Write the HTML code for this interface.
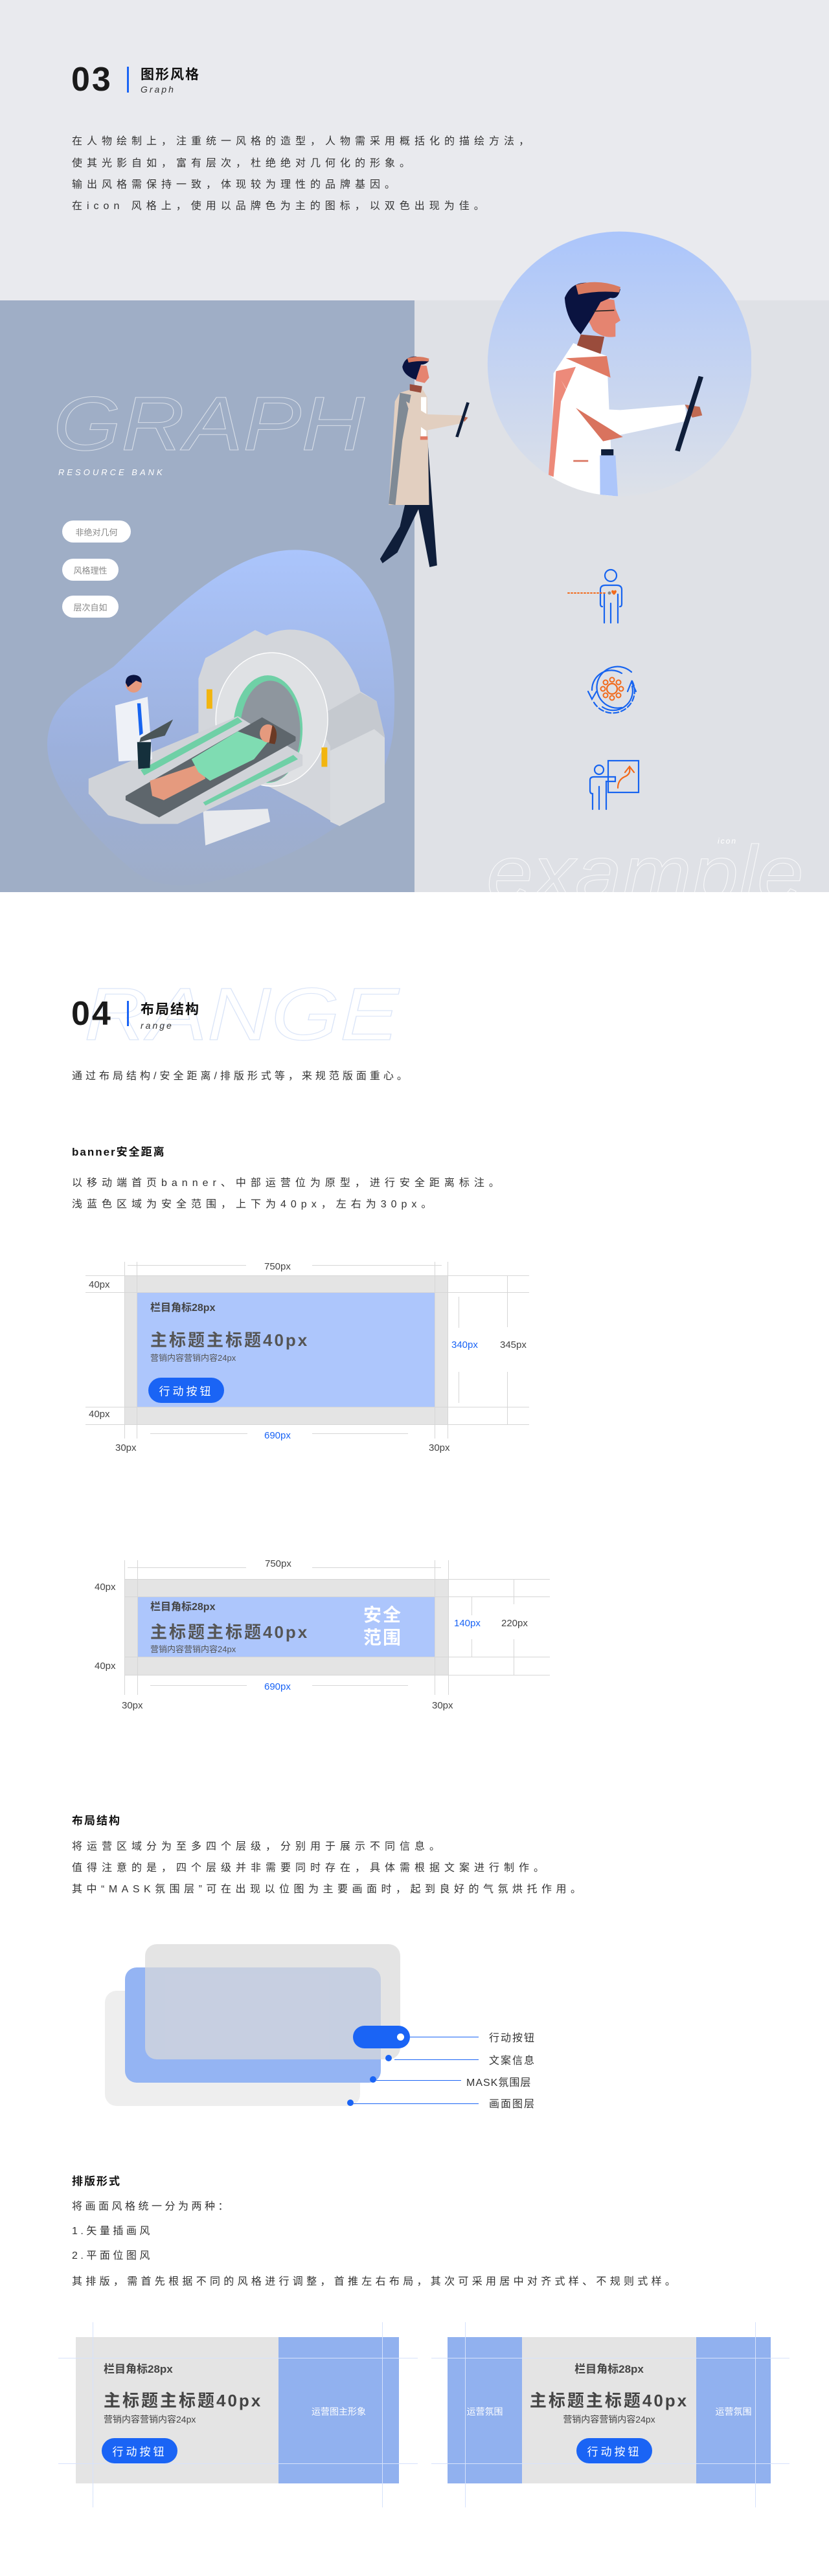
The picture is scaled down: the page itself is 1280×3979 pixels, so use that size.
<!DOCTYPE html>
<html><head><meta charset="utf-8">
<style>
*{margin:0;padding:0;box-sizing:border-box}
body{width:1280px;height:3979px;background:#fff;font-family:"Liberation Sans","Noto Sans CJK SC",sans-serif;overflow:hidden}
#r{position:relative;width:1280px;height:3979px;overflow:hidden}
.a{position:absolute}
.t{position:absolute;white-space:nowrap;line-height:1}
.b{font-weight:bold}
.body{font-size:16px;color:#333;letter-spacing:7px}
.gl{position:absolute;background:#d6d6d6}
.bl{position:absolute;background:#d6e2fb}
.btn{position:absolute;background:#1a64f5;border-radius:20px;color:#fff;font-size:17px;letter-spacing:4px;display:flex;align-items:center;justify-content:center}
.pill{position:absolute;background:#fff;border-radius:17px;font-size:13px;color:#888;display:flex;align-items:center;justify-content:center}
</style></head><body><div id="r">

<!-- SECTION 1 -->
<div class="a" style="left:0;top:0;width:1280px;height:464px;background:#e9eaee"></div>
<div class="a" style="left:0;top:464px;width:640px;height:914px;background:#9faec6"></div>
<div class="a" style="left:640px;top:464px;width:640px;height:914px;background:#dfe1e6"></div>

<div class="t b" style="left:110px;top:97px;font-size:52px;color:#1a1a1a;letter-spacing:3px">03</div>
<div class="a" style="left:196px;top:103px;width:3px;height:40px;background:#1a64f5"></div>
<div class="t b" style="left:217px;top:105px;font-size:21px;color:#111;letter-spacing:2px">图形风格</div>
<div class="t" style="left:217px;top:131px;font-size:14px;font-style:italic;color:#333;letter-spacing:3px">Graph</div>

<div class="t body" style="left:111px;top:211px">在人物绘制上，注重统一风格的造型，人物需采用概括化的描绘方法，</div>
<div class="t body" style="left:111px;top:245px">使其光影自如，富有层次，杜绝绝对几何化的形象。</div>
<div class="t body" style="left:111px;top:278px">输出风格需保持一致，体现较为理性的品牌基因。</div>
<div class="t body" style="left:111px;top:311px">在icon 风格上，使用以品牌色为主的图标，以双色出现为佳。</div>

<svg class="a" style="left:0;top:0" width="1280" height="1400">
<defs>
<linearGradient id="cg" x1="0" y1="0" x2="0" y2="1"><stop offset="0" stop-color="#abc5fb"/><stop offset="1" stop-color="#dde1e8"/></linearGradient>
<linearGradient id="bg" x1="0" y1="0" x2="0" y2="1"><stop offset="0" stop-color="#abc5fc"/><stop offset="0.6" stop-color="#9cb0dc"/><stop offset="1" stop-color="#9eadc8"/></linearGradient>
</defs>
<path d="M175,1030 C260,950 360,840 470,850 C590,860 615,1000 608,1120 C600,1230 520,1290 420,1330 C330,1370 250,1385 200,1340 C130,1280 60,1200 75,1130 C85,1080 130,1060 175,1030 Z" fill="url(#bg)"/>
<text x="82" y="695" font-family="Liberation Sans" font-style="italic" font-size="118" fill="none" stroke="#fff" stroke-opacity="0.6" stroke-width="1" textLength="481" lengthAdjust="spacingAndGlyphs">GRAPH</text>
<text x="751" y="1390" font-family="Liberation Sans" font-style="italic" font-size="120" fill="none" stroke="#fff" stroke-opacity="0.8" stroke-width="1" textLength="490" lengthAdjust="spacingAndGlyphs">example</text>
<text x="1108" y="1303" font-family="Liberation Sans" font-style="italic" font-size="12" fill="#fff" letter-spacing="2">icon</text>
<!-- icons -->
<g fill="none" stroke="#1764f0" stroke-width="2.2" stroke-linecap="round">
<circle cx="943" cy="889" r="9"/>
<path d="M930,937 Q927,937 927,933 V911 Q927,904 935,904 H952 Q960,904 960,911 V933 Q960,937 957,937"/>
<path d="M933,918 V962 M954,918 V962 M943,932 V962"/>
<path d="M975,1038 A32,32 0 1,0 960,1093"/>
<path d="M917,1085 A32,32 0 0,0 975,1050" stroke-dasharray="8 4"/>
<path d="M914,1066 A30,30 0 0,1 960,1040 M976,1060 A30,30 0 0,1 930,1092"/>
<path d="M908,1068 L914,1080 L921,1068 M969,1068 L975,1053 L982,1068"/>
<rect x="939" y="1175" width="47" height="49"/>
<circle cx="925" cy="1189" r="7"/>
<path d="M915,1250 V1226 Q911,1226 911,1221 V1205 Q911,1200 917,1200 H950 V1207 H936 V1250 M925,1215 V1250"/>
</g>
<g fill="none" stroke="#f26a1b" stroke-width="2.2" stroke-linecap="round">
<path d="M954,1217 Q954,1205 964,1200 Q974,1196 972,1187 M965,1193 L972,1184 L979,1193"/>
<circle cx="945" cy="1064" r="8"/>
<g stroke-width="2">
<circle cx="945" cy="1050" r="3.5"/><circle cx="955" cy="1054" r="3.5"/><circle cx="959" cy="1064" r="3.5"/><circle cx="955" cy="1074" r="3.5"/><circle cx="945" cy="1078" r="3.5"/><circle cx="935" cy="1074" r="3.5"/><circle cx="931" cy="1064" r="3.5"/><circle cx="935" cy="1054" r="3.5"/>
</g>
<path d="M877,916 H936" stroke-dasharray="2 3" stroke-width="2"/>
</g>
<circle cx="941" cy="916" r="2.5" fill="#888"/>
<path d="M944,913 Q946,910 948,913 Q950,910 952,913 Q952,916 948,919 Q944,916 944,913Z" fill="#f26a1b"/>
</svg>

<div class="t" style="left:90px;top:723px;font-size:13px;color:#fff;letter-spacing:4px;font-style:italic">RESOURCE BANK</div>
<div class="pill" style="left:96px;top:804px;width:106px;height:34px">非绝对几何</div>
<div class="pill" style="left:96px;top:863px;width:87px;height:34px">风格理性</div>
<div class="pill" style="left:96px;top:920px;width:87px;height:34px">层次自如</div>

<!-- circle + doctors -->
<svg class="a" style="left:560px;top:320px" width="600" height="580" viewBox="0 0 1568 1740" preserveAspectRatio="none">
<defs><clipPath id="cc"><ellipse cx="1037" cy="726" rx="533" ry="613"/></clipPath></defs>
<ellipse cx="1037" cy="726" rx="533" ry="613" fill="url(#cg)"/>
<g clip-path="url(#cc)">
<path d="M850,630 L985,690 L1010,1340 L760,1300 L770,770 L810,700 Z" fill="#fff"/>
<path d="M780,760 L860,740 L800,900 L770,1250 L750,1240 Z" fill="#ed8a7a"/>
<path d="M820,700 L985,690 L1000,790 Z" fill="#e07a64"/>
<path d="M800,800 L860,930 L1040,940 L1300,915 L1310,990 L1020,1060 L880,960 Z" fill="#fff"/>
<path d="M860,930 L970,1085 L1050,1065 Z" fill="#d9735e"/>
<rect x="962" y="1122" width="50" height="30" fill="#0f1e3a"/>
<path d="M957,1150 L1020,1150 L1030,1340 L958,1332 Z" fill="#adc6fa"/>
<rect x="850" y="1172" width="60" height="8" fill="#d9735e"/>
</g>
<path d="M880,590 L975,600 L960,680 L865,640 Z" fill="#9a4c3c"/>
<path d="M955,420 L1015,430 L1020,470 L1040,525 L1020,540 L1020,600 Q970,610 930,570 L900,500 Z" fill="#e58470"/>
<path d="M815,420 Q840,350 900,350 L1040,380 Q1030,430 1000,420 L960,440 L920,520 L880,590 Q820,520 815,420 Z" fill="#0a1340"/>
<path d="M860,360 Q950,330 1040,370 L1035,395 Q950,385 870,405 Z" fill="#d97a60"/>
<path d="M930,482 L1015,478" stroke="#222" stroke-width="5"/>
<path d="M1300,915 L1360,925 L1370,965 L1330,975 Z" fill="#c06a52"/>
<path d="M1365,785 L1270,1130" stroke="#0f1e3a" stroke-width="20"/>
<!-- walking doctor -->
<path d="M230,1080 L262,1080 L300,1660 L270,1668 L225,1400 L140,1600 L80,1650 L70,1630 L150,1480 Z" fill="#0f1e3a"/>
<path d="M150,860 L235,830 L260,880 L268,1380 L105,1380 L130,900 Z" fill="#e2cfc0"/>
<path d="M150,860 L195,870 L160,1080 L132,1380 L105,1375 Z" fill="#7f8a95"/>
<rect x="235" y="880" width="22" height="185" fill="#fff"/>
<rect x="232" y="1062" width="30" height="16" fill="#e07a64"/>
<path d="M175,900 L260,960 L400,965 L405,1000 L255,1035 L200,990 Z" fill="#e2cfc0"/>
<path d="M190,820 L240,830 L235,860 L190,850 Z" fill="#9a4c3c"/>
<path d="M205,730 L258,735 L268,790 L250,815 L215,805 Z" fill="#e58470"/>
<path d="M160,740 Q170,690 215,692 L268,712 Q255,730 235,730 L215,800 Q165,780 160,740 Z" fill="#0a1340"/>
<path d="M180,700 Q225,685 268,702 L265,715 Q225,710 185,720 Z" fill="#d97a60"/>
<path d="M398,968 L425,975 L410,995 Z" fill="#c06a52"/>
<path d="M425,905 L380,1065" stroke="#0f1e3a" stroke-width="12"/>
</svg>

<!-- MRI -->
<svg class="a" style="left:60px;top:940px" width="560" height="438" viewBox="0 0 1568 1317" preserveAspectRatio="none">
<path d="M720,230 L935,100 L985,125 Q1100,60 1250,150 Q1360,250 1390,385 L1460,430 L1495,600 L1495,900 L1300,1010 L1160,920 L1000,830 L690,700 L690,325 Z" fill="#d3d6db"/>
<path d="M1195,510 L1390,390 L1460,430 L1495,590 L1495,900 L1300,1010 L1260,990 L1260,640 Z" fill="#c5c9cf"/>
<path d="M1260,660 L1450,560 L1495,600 L1495,900 L1300,1010 L1260,990 Z" fill="#d8dbdf"/>
<ellipse cx="1007" cy="515" rx="242" ry="310" fill="#dfe1e4" stroke="#fff" stroke-width="4"/>
<ellipse cx="990" cy="560" rx="150" ry="250" fill="#6fd0a6"/>
<ellipse cx="1000" cy="570" rx="130" ry="235" fill="#8e969e"/>
<rect x="725" y="375" width="25" height="90" fill="#f2b50f"/>
<rect x="1222" y="645" width="25" height="90" fill="#f2b50f"/>
<path d="M710,940 L990,930 L1000,990 L720,1100 Z" fill="#e8eaee"/>
<path d="M215,790 L860,500 L1140,680 L1140,730 L600,1000 L440,1000 L300,960 L215,860 Z" fill="#d0d3d8"/>
<path d="M440,750 L860,505 L880,525 L455,775 Z" fill="#6fd0a6"/>
<path d="M710,900 L1100,680 L1120,700 L720,915 Z" fill="#6fd0a6"/>
<path d="M375,870 L965,505 L1110,595 L1110,615 L520,970 L375,890 Z" fill="#5e666c"/>
<path d="M480,800 L700,720 L720,790 L540,890 L490,870 Z" fill="#e59a7e"/>
<path d="M660,700 L860,570 L990,620 L930,700 L740,800 L690,760 Z" fill="#7fdcb2"/>
<ellipse cx="990" cy="580" rx="35" ry="42" fill="#e59a7e"/>
<path d="M1010,540 Q1040,570 1020,630 L995,625 Z" fill="#6b3a25"/>
<path d="M330,450 L470,410 L490,700 L345,710 Z" fill="#eef1f7"/>
<path d="M425,620 L485,620 L480,740 L430,745 Z" fill="#15303c"/>
<path d="M425,440 L440,440 L450,580 L435,590 Z" fill="#1764f0"/>
<ellipse cx="410" cy="350" rx="35" ry="40" fill="#e59a7e"/>
<path d="M375,345 Q375,310 410,308 Q445,310 445,345 L420,335 L385,365 Z" fill="#0a1340"/>
<path d="M440,600 L580,515 L545,590 L435,620 Z" fill="#4a5558"/>
</svg>

<!-- SECTION 2 -->
<svg class="a" style="left:0;top:1500px" width="800" height="120">
<text x="130" y="106" font-family="Liberation Sans" font-style="italic" font-size="115" fill="none" stroke="#dbe5f8" stroke-width="1.2" textLength="486" lengthAdjust="spacingAndGlyphs">RANGE</text>
</svg>
<div class="t b" style="left:110px;top:1540px;font-size:52px;color:#1a1a1a;letter-spacing:3px">04</div>
<div class="a" style="left:196px;top:1546px;width:3px;height:39px;background:#1a64f5"></div>
<div class="t b" style="left:217px;top:1549px;font-size:21px;color:#111;letter-spacing:2px">布局结构</div>
<div class="t" style="left:217px;top:1577px;font-size:14px;font-style:italic;color:#333;letter-spacing:3px">range</div>

<div class="t" style="left:111px;top:1655px;font-size:16px;color:#333;letter-spacing:5px">通过布局结构/安全距离/排版形式等，来规范版面重心。</div>
<div class="t b" style="left:111px;top:1771px;font-size:17px;color:#111;letter-spacing:2px">banner安全距离</div>
<div class="t" style="left:111px;top:1820px;font-size:16px;color:#333;letter-spacing:7px">以移动端首页banner、中部运营位为原型，进行安全距离标注。</div>
<div class="t" style="left:111px;top:1853px;font-size:16px;color:#333;letter-spacing:7px">浅蓝色区域为安全范围，上下为40px，左右为30px。</div>

<!-- diagram 1 -->
<div class="a" style="left:192px;top:1970px;width:499px;height:230px;background:#e4e4e4"></div>
<div class="a" style="left:211px;top:1996px;width:460px;height:177px;background:#adc6fc"></div>
<div class="gl" style="left:132px;top:1970px;width:685px;height:1px"></div>
<div class="gl" style="left:132px;top:1996px;width:685px;height:1px"></div>
<div class="gl" style="left:132px;top:2173px;width:685px;height:1px"></div>
<div class="gl" style="left:132px;top:2200px;width:685px;height:1px"></div>
<div class="gl" style="left:192px;top:1949px;width:1px;height:273px"></div>
<div class="gl" style="left:211px;top:1949px;width:1px;height:273px"></div>
<div class="gl" style="left:671px;top:1949px;width:1px;height:273px"></div>
<div class="gl" style="left:691px;top:1949px;width:1px;height:273px"></div>
<div class="gl" style="left:197px;top:1954px;width:183px;height:1px"></div>
<div class="gl" style="left:482px;top:1954px;width:200px;height:1px"></div>
<div class="gl" style="left:232px;top:2214px;width:150px;height:1px"></div>
<div class="gl" style="left:482px;top:2214px;width:148px;height:1px"></div>
<div class="gl" style="left:708px;top:2003px;width:1px;height:48px"></div>
<div class="gl" style="left:708px;top:2119px;width:1px;height:48px"></div>
<div class="gl" style="left:783px;top:1970px;width:1px;height:80px"></div>
<div class="gl" style="left:783px;top:2119px;width:1px;height:81px"></div>
<div class="t" style="left:408px;top:1949px;font-size:15px;color:#444">750px</div>
<div class="t" style="left:137px;top:1977px;font-size:15px;color:#444">40px</div>
<div class="t" style="left:137px;top:2177px;font-size:15px;color:#444">40px</div>
<div class="t" style="left:697px;top:2070px;font-size:15px;color:#1a64f5">340px</div>
<div class="t" style="left:772px;top:2070px;font-size:15px;color:#444">345px</div>
<div class="t" style="left:408px;top:2210px;font-size:15px;color:#1a64f5">690px</div>
<div class="t" style="left:178px;top:2229px;font-size:15px;color:#444">30px</div>
<div class="t" style="left:662px;top:2229px;font-size:15px;color:#444">30px</div>
<div class="t b" style="left:232px;top:2013px;font-size:16px;color:#444">栏目角标28px</div>
<div class="t b" style="left:232px;top:2057px;font-size:26px;color:#555;letter-spacing:3px">主标题主标题40px</div>
<div class="t" style="left:232px;top:2091px;font-size:13px;color:#555">营销内容营销内容24px</div>
<div class="btn" style="left:229px;top:2128px;width:117px;height:39px">行动按钮</div>

<!-- diagram 2 -->
<div class="a" style="left:192px;top:2439px;width:500px;height:148px;background:#e4e4e4"></div>
<div class="a" style="left:212px;top:2466px;width:460px;height:93px;background:#adc6fc"></div>
<div class="gl" style="left:192px;top:2439px;width:657px;height:1px"></div>
<div class="gl" style="left:192px;top:2466px;width:657px;height:1px"></div>
<div class="gl" style="left:192px;top:2559px;width:657px;height:1px"></div>
<div class="gl" style="left:192px;top:2587px;width:657px;height:1px"></div>
<div class="gl" style="left:192px;top:2410px;width:1px;height:208px"></div>
<div class="gl" style="left:212px;top:2410px;width:1px;height:208px"></div>
<div class="gl" style="left:671px;top:2410px;width:1px;height:208px"></div>
<div class="gl" style="left:692px;top:2410px;width:1px;height:208px"></div>
<div class="gl" style="left:197px;top:2421px;width:183px;height:1px"></div>
<div class="gl" style="left:482px;top:2421px;width:199px;height:1px"></div>
<div class="gl" style="left:232px;top:2603px;width:149px;height:1px"></div>
<div class="gl" style="left:482px;top:2603px;width:148px;height:1px"></div>
<div class="gl" style="left:728px;top:2466px;width:1px;height:29px"></div>
<div class="gl" style="left:728px;top:2532px;width:1px;height:27px"></div>
<div class="gl" style="left:793px;top:2439px;width:1px;height:39px"></div>
<div class="gl" style="left:793px;top:2532px;width:1px;height:55px"></div>
<div class="t" style="left:409px;top:2408px;font-size:15px;color:#444">750px</div>
<div class="t" style="left:146px;top:2444px;font-size:15px;color:#444">40px</div>
<div class="t" style="left:146px;top:2566px;font-size:15px;color:#444">40px</div>
<div class="t" style="left:701px;top:2500px;font-size:15px;color:#1a64f5">140px</div>
<div class="t" style="left:774px;top:2500px;font-size:15px;color:#444">220px</div>
<div class="t" style="left:408px;top:2598px;font-size:15px;color:#1a64f5">690px</div>
<div class="t" style="left:188px;top:2627px;font-size:15px;color:#444">30px</div>
<div class="t" style="left:667px;top:2627px;font-size:15px;color:#444">30px</div>
<div class="t b" style="left:232px;top:2475px;font-size:16px;color:#444">栏目角标28px</div>
<div class="t b" style="left:232px;top:2508px;font-size:26px;color:#555;letter-spacing:3px">主标题主标题40px</div>
<div class="t" style="left:232px;top:2541px;font-size:13px;color:#555">营销内容营销内容24px</div>
<div class="t b" style="left:561px;top:2481px;font-size:28px;color:#fff;letter-spacing:2px">安全</div>
<div class="t b" style="left:561px;top:2516px;font-size:28px;color:#fff;letter-spacing:2px">范围</div>

<!-- SECTION 3 -->
<div class="t b" style="left:111px;top:2804px;font-size:17px;color:#111;letter-spacing:2px">布局结构</div>
<div class="t" style="left:111px;top:2845px;font-size:16px;color:#333;letter-spacing:7px">将运营区域分为至多四个层级，分别用于展示不同信息。</div>
<div class="t" style="left:111px;top:2878px;font-size:16px;color:#333;letter-spacing:7px">值得注意的是，四个层级并非需要同时存在，具体需根据文案进行制作。</div>
<div class="t" style="left:111px;top:2911px;font-size:16px;color:#333;letter-spacing:6.5px">其中“MASK氛围层”可在出现以位图为主要画面时，起到良好的气氛烘托作用。</div>

<div class="a" style="left:162px;top:3075px;width:394px;height:178px;background:#eeeeee;border-radius:18px"></div>
<div class="a" style="left:193px;top:3039px;width:395px;height:178px;background:#94b4f3;border-radius:18px"></div>
<div class="a" style="left:224px;top:3003px;width:394px;height:178px;background:rgba(218,218,218,0.72);border-radius:18px"></div>
<div class="a" style="left:545px;top:3129px;width:88px;height:35px;background:#1a64f5;border-radius:18px"></div>
<div class="a" style="left:613px;top:3141px;width:11px;height:11px;background:#fff;border-radius:50%"></div>
<div class="a" style="left:633px;top:3146px;width:106px;height:1px;background:#1a64f5"></div>
<div class="a" style="left:595px;top:3174px;width:10px;height:10px;background:#1a64f5;border-radius:50%"></div>
<div class="a" style="left:609px;top:3181px;width:130px;height:1px;background:#1a64f5"></div>
<div class="a" style="left:571px;top:3207px;width:10px;height:10px;background:#1a64f5;border-radius:50%"></div>
<div class="a" style="left:581px;top:3213px;width:131px;height:1px;background:#1a64f5"></div>
<div class="a" style="left:536px;top:3243px;width:10px;height:10px;background:#1a64f5;border-radius:50%"></div>
<div class="a" style="left:546px;top:3249px;width:193px;height:1px;background:#1a64f5"></div>
<div class="t" style="left:755px;top:3141px;font-size:16px;color:#333;letter-spacing:2px">行动按钮</div>
<div class="t" style="left:755px;top:3176px;font-size:16px;color:#333;letter-spacing:2px">文案信息</div>
<div class="t" style="left:720px;top:3210px;font-size:16px;color:#333;letter-spacing:1px">MASK氛围层</div>
<div class="t" style="left:755px;top:3243px;font-size:16px;color:#333;letter-spacing:2px">画面图层</div>

<div class="t b" style="left:111px;top:3361px;font-size:17px;color:#111;letter-spacing:2px">排版形式</div>
<div class="t" style="left:111px;top:3401px;font-size:16px;color:#333;letter-spacing:4.5px">将画面风格统一分为两种：</div>
<div class="t" style="left:111px;top:3439px;font-size:16px;color:#333;letter-spacing:4.5px">1.矢量插画风</div>
<div class="t" style="left:111px;top:3477px;font-size:16px;color:#333;letter-spacing:4.5px">2.平面位图风</div>
<div class="t" style="left:111px;top:3517px;font-size:16px;color:#333;letter-spacing:5.3px">其排版，需首先根据不同的风格进行调整，首推左右布局，其次可采用居中对齐式样、不规则式样。</div>

<!-- cards -->
<div class="a" style="left:117px;top:3610px;width:499px;height:226px;background:#e4e4e4"></div>
<div class="a" style="left:430px;top:3610px;width:186px;height:226px;background:#91b1ef"></div>
<div class="a" style="left:691px;top:3610px;width:499px;height:226px;background:#e4e4e4"></div>
<div class="a" style="left:691px;top:3610px;width:115px;height:226px;background:#91b1ef"></div>
<div class="a" style="left:1075px;top:3610px;width:115px;height:226px;background:#91b1ef"></div>
<div class="bl" style="left:90px;top:3642px;width:555px;height:1px"></div>
<div class="bl" style="left:90px;top:3805px;width:555px;height:1px"></div>
<div class="bl" style="left:666px;top:3642px;width:553px;height:1px"></div>
<div class="bl" style="left:666px;top:3805px;width:553px;height:1px"></div>
<div class="bl" style="left:143px;top:3587px;width:1px;height:286px"></div>
<div class="bl" style="left:590px;top:3587px;width:1px;height:286px"></div>
<div class="bl" style="left:718px;top:3587px;width:1px;height:286px"></div>
<div class="bl" style="left:1166px;top:3587px;width:1px;height:286px"></div>

<div class="t b" style="left:160px;top:3651px;font-size:17px;color:#444">栏目角标28px</div>
<div class="t b" style="left:160px;top:3695px;font-size:26px;color:#444;letter-spacing:3px">主标题主标题40px</div>
<div class="t" style="left:160px;top:3730px;font-size:14px;color:#444">营销内容营销内容24px</div>
<div class="btn" style="left:157px;top:3766px;width:117px;height:39px">行动按钮</div>
<div class="t" style="left:430px;top:3718px;width:186px;text-align:center;font-size:14px;color:#fff">运营图主形象</div>

<div class="t b" style="left:806px;top:3651px;width:269px;text-align:center;font-size:17px;color:#444">栏目角标28px</div>
<div class="t b" style="left:806px;top:3695px;width:269px;text-align:center;font-size:26px;color:#444;letter-spacing:3px">主标题主标题40px</div>
<div class="t" style="left:806px;top:3730px;width:269px;text-align:center;font-size:14px;color:#444">营销内容营销内容24px</div>
<div class="btn" style="left:890px;top:3766px;width:117px;height:39px">行动按钮</div>
<div class="t" style="left:691px;top:3718px;width:115px;text-align:center;font-size:14px;color:#fff">运营氛围</div>
<div class="t" style="left:1075px;top:3718px;width:115px;text-align:center;font-size:14px;color:#fff">运营氛围</div>

</div></body></html>
